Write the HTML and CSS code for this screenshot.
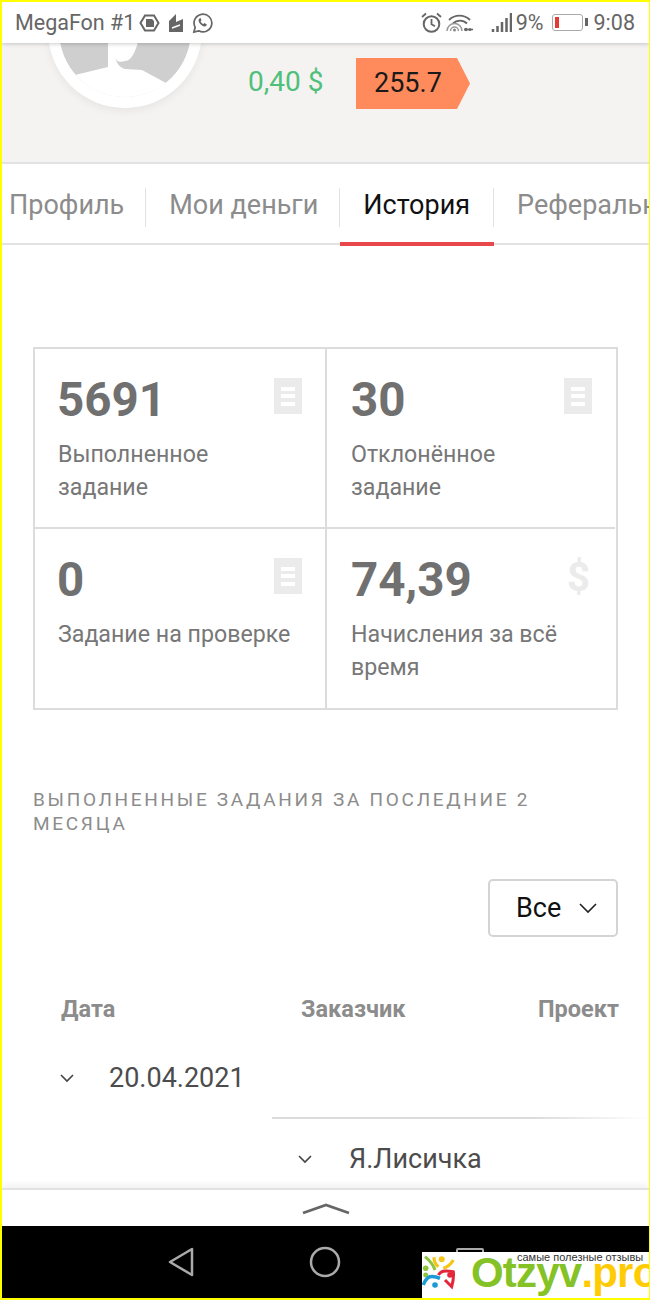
FILE: index.html
```html
<!DOCTYPE html>
<html lang="ru">
<head>
    <meta charset="UTF-8">
    <meta name="viewport" content="width=device-width, initial-scale=1.0">
    <title>История</title>
    <link rel="stylesheet" href="styles.css">
</head>
<body>

<div class="screen">
    <header class="status">
        <span class="carrier">MegaFon #1</span>
        <svg class="ic" width="21" height="20" viewBox="0 0 21 20"><path d="M6 2.500h9l4.500 7.500-4.500 7.500H6L1.500 10z" fill="none" stroke="#666" stroke-width="2"/><path d="M7 6h6l2 2v6H7z" fill="#666"/></svg>
        <svg class="ic ic-doc" width="16" height="20" viewBox="0 0 16 20"><path d="M1 8l7-7v8l7-3v13H1z" fill="#666"/><path d="M4 15l8-3" stroke="#fff" stroke-width="1.500"/></svg>
        <svg class="ic ic-wa" width="21" height="22" viewBox="0 0 22 22"><path d="M2 20.500l1.300-5A9.300 9.300 0 1 1 7 19.200z" fill="none" stroke="#666" stroke-width="1.800"/><path d="M7.500 6.500c-1.500 2 0 4.500 2 6.300s4.200 2.700 5.500 1.200l.6-1.500-2.600-1.400-1 1c-1.400-.5-2.400-1.500-3-3l1-1-1.200-2.600z" fill="#666"/></svg>
        <span class="status-right">
            <svg width="21" height="22" viewBox="0 0 21 22"><circle cx="10.500" cy="12" r="7.800" fill="none" stroke="#666" stroke-width="2"/><path d="M10.500 7v5.200l3.500 2M1 5l4-3.500M20 5l-4-3.500" fill="none" stroke="#666" stroke-width="1.800"/></svg>
            <svg class="ic-wifi" width="27" height="20" viewBox="0 0 27 20"><path d="M3 7a15 15 0 0 1 21 0M7 10.500a10 10 0 0 1 14 0" fill="none" stroke="#666" stroke-width="1.800"/><path d="M1 18a7.500 7.500 0 0 1 15 0M4.500 18a4 4 0 0 1 8 0" fill="none" stroke="#999" stroke-width="1.500"/><circle cx="8.500" cy="17" r="1.500" fill="#888"/><path d="M18 16.500h9" stroke="#666" stroke-width="1.500"/><circle cx="20" cy="16.500" r="1.800" fill="#666"/><circle cx="24" cy="16.500" r="1.500" fill="#666"/></svg>
            <svg class="ic-signal" width="21" height="20" viewBox="0 0 21 20"><path d="M2 19v-3M6.500 19v-6M11 19v-10M15.500 19V5M20 19V0" stroke="#666" stroke-width="2.500"/></svg>
            <span class="percent">9%</span>
            <span class="battery"><i class="battery-level"></i></span>
            <span class="clock">9:08</span>
        </span>
    </header>

    <section class="profile">
        <div class="avatar">
            <svg width="132" height="132" viewBox="0 0 132 132">
                <circle cx="66" cy="66" r="66" fill="#cfcfcf"/>
                <path d="M16 110L49 102V50H85C80 75 76 96 66 96C60 98 57 96 56 92C58 100 62 103 66 104L83 105L107 118L132 132H0V120Z" fill="#fff"/>
            </svg>
        </div>
        <div class="profile-info">
            <div class="name">Д</div>
            <div class="profile-row">
                <span class="money">0,40 $</span>
                <span class="rating">255.7</span>
            </div>
        </div>
    </section>

    <nav class="tabs">
        <a class="tab">Профиль</a>
        <a class="tab">Мои деньги</a>
        <a class="tab tab-active">История</a>
        <a class="tab">Реферальная</a>
    </nav>

    <main class="content">
        <div class="stats">
            <div class="stat">
                <div class="stat-top">
                    <div class="stat-num">5691</div>
                    <svg class="stat-icon" width="28" height="36" viewBox="0 0 28 36"><use href="#doc"/></svg>
                </div>
                <div class="stat-label">Выполненное<br>задание</div>
            </div>
            <div class="stat">
                <div class="stat-top">
                    <div class="stat-num">30</div>
                    <svg class="stat-icon" width="28" height="36" viewBox="0 0 28 36"><use href="#doc"/></svg>
                </div>
                <div class="stat-label">Отклонённое<br>задание</div>
            </div>
            <div class="stat">
                <div class="stat-top">
                    <div class="stat-num">0</div>
                    <svg class="stat-icon" width="28" height="36" viewBox="0 0 28 36"><use href="#doc"/></svg>
                </div>
                <div class="stat-label">Задание на проверке</div>
            </div>
            <div class="stat">
                <div class="stat-top">
                    <div class="stat-num">74,39</div>
                    <span class="stat-dollar">$</span>
                </div>
                <div class="stat-label">Начисления за всё<br>время</div>
            </div>
        </div>

        <h3 class="section-title">ВЫПОЛНЕННЫЕ ЗАДАНИЯ ЗА ПОСЛЕДНИЕ 2 МЕСЯЦА</h3>

        <div class="filter-row">
            <div class="select">
                <span>Все</span>
                <svg width="20" height="12" viewBox="0 0 20 12"><path d="M2 2l8 8 8-8" fill="none" stroke="#222" stroke-width="1.600"/></svg>
            </div>
        </div>

        <div class="table-head">
            <span class="th th-date">Дата</span>
            <span class="th th-client">Заказчик</span>
            <span class="th th-project">Проект</span>
        </div>
        <div class="row-date">
            <svg width="16" height="10" viewBox="0 0 16 10"><path d="M2 2l6 6 6-6" fill="none" stroke="#444" stroke-width="1.600"/></svg>
            <span>20.04.2021</span>
        </div>
        <div class="row-client">
            <svg width="16" height="10" viewBox="0 0 16 10"><path d="M2 2l6 6 6-6" fill="none" stroke="#444" stroke-width="1.600"/></svg>
            <span>Я.Лисичка</span>
        </div>
    </main>

    <div class="sheet">
        <svg width="50" height="14" viewBox="0 0 50 14"><path d="M2 11l23-8 23 8" fill="none" stroke="#666" stroke-width="2.800"/></svg>
    </div>

    <footer class="navbar">
        <svg class="nav-back" width="28" height="32" viewBox="0 0 28 32"><path d="M25 3v26L3 16z" fill="none" stroke="#aaa" stroke-width="2.500" stroke-linejoin="round"/></svg>
        <svg class="nav-home" width="32" height="32" viewBox="0 0 32 32"><circle cx="16" cy="16" r="14" fill="none" stroke="#aaa" stroke-width="2.500"/></svg>
        <span class="nav-recent"></span>
    </footer>

    <div class="watermark">
        <svg class="wm-icon" width="34" height="46" viewBox="0 0 34 46">
            <circle cx="19.700" cy="7.300" r="3" fill="#f5c518"/>
            <path d="M12 5.300C12 10 14 13 16.300 14.700M31.300 8C29 12 26 15 21.300 16.300" fill="none" stroke="#f5c518" stroke-width="3.200"/>
            <circle cx="3.700" cy="16.300" r="2.800" fill="#8cc63f"/>
            <circle cx="3.700" cy="23" r="2.500" fill="#8cc63f"/>
            <path d="M3 4.700C7 8 11 12 13 18" fill="none" stroke="#8cc63f" stroke-width="3"/>
            <circle cx="28" cy="23" r="2.800" fill="#e3263a"/>
            <path d="M16.300 23C19 19 22 18 31.300 19.700C32 25 31 30 29.700 34.700C27 32 25 30 23 28" fill="none" stroke="#e3263a" stroke-width="3"/>
            <circle cx="13" cy="33" r="2.800" fill="#1c9ad6"/>
            <path d="M1.300 33C3 28 5 26 8 24.700C11 24 15 25 18 26.300" fill="none" stroke="#1c9ad6" stroke-width="3.500"/>
        </svg>
        <div class="wm-text">
            <span class="wm-slogan">самые полезные отзывы</span>
            <span class="wm-logo">Otzyv<b>.pro</b></span>
        </div>
    </div>
</div>

<svg width="0" height="0" class="defs">
    <symbol id="doc" viewBox="0 0 28 36">
        <path d="M0 0h28v36H0z M7 9v4h14V9z M7 16v4h14v-4z M7 24v4h14v-4z" fill="#ebebeb" fill-rule="evenodd"/>
    </symbol>
</svg>

</body>
</html>
```
FILE: styles.css
```css
* {
    box-sizing: border-box;
}

html, body {
    margin: 0;
    padding: 0;
    background-color: #fff;
}

.defs {
    display: none;
}

.screen {
    position: relative;
    width: 650px;
    height: 1300px;
    border: 2px solid #ff0;
    border-right-width: 1px;
    overflow: hidden;
    display: flex;
    flex-direction: column;
    font-family: 'Roboto', sans-serif;
    background-color: #fff;
}

/* status bar */
.status {
    position: relative;
    z-index: 2;
    flex: 0 0 41px;
    display: flex;
    align-items: center;
    padding: 0 14px 0 13px;
    background-color: #fff;
    color: #666;
    font-size: 21.500px;
    box-shadow: 0 1px 4px rgba(0, 0, 0, 0.2);
}

.carrier {
    margin-right: 4px;
}

.ic {
    margin-right: 8px;
}

.status-right {
    margin-left: auto;
    display: flex;
    align-items: center;
}

.ic-wifi {
    margin-left: 4px;
}

.ic-signal {
    margin-left: 18px;
}

.percent {
    margin-left: 4px;
}

.battery {
    position: relative;
    width: 31px;
    height: 17px;
    margin-left: 8px;
    border: 1.500px solid #aaa;
    border-radius: 3px;
    padding: 2px;
}

.battery::after {
    content: "";
    position: absolute;
    top: 3px;
    right: -6px;
    width: 3px;
    height: 8px;
    background-color: #666;
}

.battery-level {
    display: block;
    width: 4px;
    height: 100%;
    background-color: #e53935;
}

.clock {
    margin-left: 11px;
}

/* profile header */
.profile {
    flex: 0 0 121px;
    display: flex;
    background-color: #f4f3f1;
    border-bottom: 2px solid #e2e2e2;
}

.avatar {
    flex: none;
    width: 154px;
    height: 154px;
    margin: -89px 0 0 46px;
    padding: 11px;
    border-radius: 50%;
    background-color: #fff;
    box-shadow: 0 3px 8px rgba(0, 0, 0, 0.06);
}

.avatar svg {
    display: block;
    border-radius: 50%;
}

.profile-info {
    margin-left: 46px;
}

.name {
    height: 0;
    margin-top: -40px;
    line-height: 40px;
    font-size: 40px;
    color: #222;
}

.profile-row {
    display: flex;
    align-items: center;
    margin-top: 55px;
}

.money {
    width: 108px;
    margin-bottom: 4px;
    font-size: 28px;
    color: #4fc07a;
}

.rating {
    width: 114px;
    height: 51px;
    padding-left: 18px;
    line-height: 51px;
    font-size: 27px;
    color: #1a1a1a;
    background-color: #ff8a5b;
    clip-path: polygon(0 0, 101px 0, 100% 50%, 101px 100%, 0 100%);
}

/* tabs */
.tabs {
    flex: 0 0 81px;
    display: flex;
    align-items: center;
    padding-top: 8px;
    border-bottom: 2px solid #e2e2e2;
    white-space: nowrap;
}

.tab {
    position: relative;
    flex: none;
    height: 39px;
    padding: 0 21px 0 23px;
    border-right: 1px solid #e2e2e2;
    line-height: 35px;
    font-size: 27px;
    color: #8c8c8c;
}

.tab:first-child {
    padding-left: 7px;
}

.tab:last-child {
    border-right: none;
}

.tab-active {
    padding-right: 23px;
    color: #111;
}

.tab-active::after {
    content: "";
    position: absolute;
    left: 0;
    right: -1px;
    bottom: -19px;
    height: 4px;
    background-color: #e8474c;
}

/* main */
.content {
    flex: 1;
    min-height: 0;
    overflow: hidden;
    padding: 102px 31px 0;
}

.stats {
    display: grid;
    grid-template-columns: 292px 288px;
    border: 2px solid #dcdcdc;
}

.stat {
    height: 180px;
    padding: 22px 23px 0 22px;
    border-right: 2px solid #dcdcdc;
    border-bottom: 2px solid #dcdcdc;
}

.stat:nth-child(2n) {
    padding-left: 24px;
    border-right: none;
}

.stat:nth-child(n+3) {
    height: 179px;
    border-bottom: none;
}

.stat-top {
    display: flex;
    justify-content: space-between;
    align-items: flex-start;
}

.stat-num {
    font-size: 47.500px;
    line-height: 58px;
    font-weight: 700;
    color: #707070;
}

.stat-icon {
    margin-top: 7px;
}

.stat-dollar {
    margin: 2px 2px 0 0;
    font-size: 40px;
    line-height: 50px;
    font-weight: 700;
    color: #ebebeb;
}

.stat-label {
    margin: 9px 0 0 1px;
    font-size: 23.200px;
    line-height: 33px;
    color: #777;
}

.stat:nth-child(2n) .stat-label {
    margin-left: 0;
}

.section-title {
    max-width: 540px;
    margin: 78px 0 0;
    font-size: 19px;
    line-height: 24px;
    font-weight: 400;
    letter-spacing: 2.700px;
    color: #8c8c8c;
}

.filter-row {
    display: flex;
    justify-content: flex-end;
    margin-top: 43px;
}

.select {
    width: 130px;
    height: 58px;
    display: flex;
    align-items: center;
    justify-content: space-between;
    padding: 0 18px 0 26px;
    border: 2px solid #d4d4d4;
    border-radius: 5px;
    font-size: 27px;
    color: #111;
}

.table-head {
    position: relative;
    height: 28px;
    margin-top: 58px;
    font-size: 23.500px;
    line-height: 28px;
    font-weight: 700;
    color: #8c8c8c;
    white-space: nowrap;
}

.th {
    position: absolute;
    top: 0;
}

.th-date {
    left: 28px;
}

.th-client {
    left: 268px;
}

.th-project {
    left: 505px;
}

.row-date {
    display: flex;
    align-items: center;
    height: 40px;
    margin-top: 35px;
    margin-left: 26px;
    font-size: 27px;
    color: #4c4c4c;
}

.row-date span {
    margin-left: 34px;
}

.row-client {
    display: flex;
    align-items: center;
    height: 40px;
    margin: 19px -31px 0 239px;
    padding: 22px 0 0 25px;
    box-sizing: content-box;
    background: linear-gradient(to right, #dcdcdc, #dcdcdc 70%, #fff) no-repeat top / 100% 2px;
    font-size: 27px;
    color: #4c4c4c;
}

.row-client span {
    margin-left: 36px;
}

/* bottom */
.sheet {
    position: absolute;
    left: 0;
    right: 0;
    bottom: 72px;
    height: 38px;
    display: flex;
    justify-content: center;
    padding-top: 12px;
    background-color: #fff;
    border-top: 2px solid #e2e2e2;
    box-shadow: 0 -4px 6px rgba(0, 0, 0, 0.05);
}

.navbar {
    position: absolute;
    left: 0;
    right: 0;
    bottom: 0;
    height: 72px;
    background-color: #000;
    display: flex;
    align-items: center;
    padding-left: 165px;
}

.nav-home {
    margin-left: 114px;
}

.nav-recent {
    width: 28px;
    height: 28px;
    margin-left: 115px;
    border: 2px solid #aaa;
    border-radius: 2px;
}

.watermark {
    position: absolute;
    right: 0;
    bottom: 0;
    width: 227px;
    height: 46px;
    display: flex;
    gap: 15px;
    background-color: #fff;
    overflow: hidden;
}

.wm-icon {
    flex: none;
}

.wm-text {
    flex: none;
    display: flex;
    flex-direction: column;
    font-family: 'Liberation Sans', sans-serif;
}

.wm-slogan {
    margin-left: 46px;
    font-size: 11px;
    line-height: 10px;
    color: #333;
    white-space: nowrap;
}

.wm-logo {
    font-size: 42px;
    line-height: 22px;
    font-weight: 700;
    letter-spacing: -0.800px;
    color: #84c225;
    white-space: nowrap;
}

.wm-logo b {
    color: #ffcb05;
}
```
